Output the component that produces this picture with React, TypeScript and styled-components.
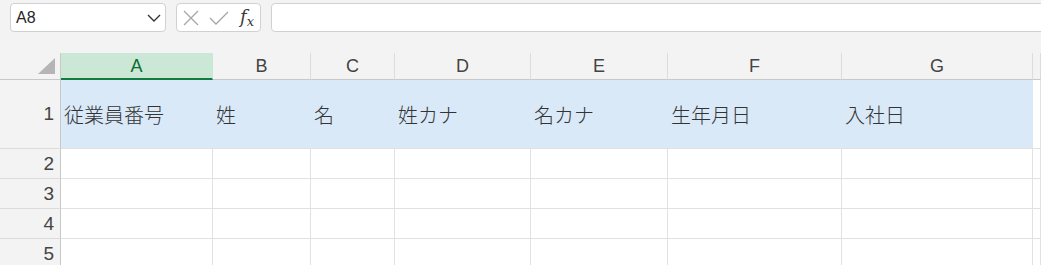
import React from "react";
import styled, { createGlobalStyle } from "styled-components";

const Global = createGlobalStyle`
  html, body { margin: 0; padding: 0; background: #f3f3f3; }
  body { width: 1041px; height: 265px; overflow: hidden; font-family: "Liberation Sans", Arial, sans-serif; }
`;

const Page = styled.div`
  width: 1041px;
  height: 265px;
  background: #f3f3f3;
  display: flex;
  flex-direction: column;
  overflow: hidden;
`;

const FormulaBar = styled.div`
  display: flex;
  gap: 10px;
  padding: 3px 0 0 10px;
  height: 53px;
  flex: none;
  box-sizing: border-box;
  align-items: flex-start;
`;

const Box = styled.div<{ $w?: number; $grow?: boolean }>`
  box-sizing: border-box;
  height: 29px;
  background: #ffffff;
  border: 1px solid #d1d1d1;
  border-radius: 4px;
  display: flex;
  align-items: center;
  ${(p) => (p.$w ? `width: ${p.$w}px; flex: none;` : "")}
  ${(p) => (p.$grow ? `flex: 1; margin-right: -10px;` : "")}
`;

const NameText = styled.span`
  flex: 1;
  padding-left: 5px;
  font-size: 16px;
  color: #262626;
`;

const Chevron = styled.svg`
  width: 16px;
  height: 10px;
  margin-right: 3px;
`;

const FxBox = styled(Box)`
  justify-content: flex-start;
  padding-left: 5px;
  gap: 8px;
`;

const IconSvg = styled.svg`
  flex: none;
`;

const Fx = styled.span`
  font-family: "DejaVu Serif", "Liberation Serif", serif;
  font-style: italic;
  font-size: 18px;
  color: #3a3a3a;
  margin-left: 2px;
  line-height: 1;
  & sub {
    font-size: 13px;
    vertical-align: -3px;
  }
`;

const Sheet = styled.div`
  display: grid;
  grid-template-columns: 61px 152px 98px 84px 136px 137px 174px 191px 1fr;
  grid-template-rows: 27px 69px 30px 30px 30px 30px;
`;

const Corner = styled.div`
  box-sizing: border-box;
  background: #f3f3f3;
  border-right: 1px solid #c8c8c8;
  border-bottom: 1px solid #c8c8c8;
  display: flex;
  align-items: flex-end;
  justify-content: flex-end;
  padding: 0 5px 5px 0;
`;

const ColHead = styled.div<{ $sel?: boolean }>`
  box-sizing: border-box;
  background: ${(p) => (p.$sel ? "#cae8d5" : "#f3f3f3")};
  border-right: 1px solid ${(p) => (p.$sel ? "#cae8d5" : "#dcdcdc")};
  border-bottom: ${(p) => (p.$sel ? "2px solid #107c41" : "1px solid #c8c8c8")};
  color: ${(p) => (p.$sel ? "#0e6b35" : "#444444")};
  font-family: "Liberation Sans", Arial, sans-serif;
  font-size: 18px;
  display: flex;
  align-items: center;
  justify-content: center;
  padding-top: ${(p) => (p.$sel ? "2px" : "1px")};
`;

const RowHead = styled.div`
  box-sizing: border-box;
  background: #f3f3f3;
  border-right: 1px solid #c8c8c8;
  border-bottom: 1px solid #dcdcdc;
  color: #444444;
  font-family: "Liberation Sans", Arial, sans-serif;
  font-size: 19px;
  display: flex;
  align-items: center;
  justify-content: flex-end;
  padding-right: 6px;
`;

const Cell = styled.div<{ $fill?: boolean }>`
  box-sizing: border-box;
  background: ${(p) => (p.$fill ? "#dae9f8" : "#ffffff")};
  border-right: 1px solid ${(p) => (p.$fill ? "#dae9f8" : "#e1e1e1")};
  border-bottom: 1px solid #e1e1e1;
  font-family: "Noto Sans CJK JP", sans-serif;
  font-weight: 300;
  font-size: 20px;
  color: #333333;
  display: flex;
  align-items: center;
  padding-left: 3px;
  white-space: nowrap;
  overflow: hidden;
`;

const cols = ["A", "B", "C", "D", "E", "F", "G", ""];
const headers = ["従業員番号", "姓", "名", "姓カナ", "名カナ", "生年月日", "入社日"];

export default function App() {
  return (
    <Page>
      <Global />
      <FormulaBar>
        <Box $w={156}>
          <NameText>A8</NameText>
          <Chevron viewBox="0 0 16 10">
            <path d="M2 2 L8 8 L14 2" fill="none" stroke="#333" strokeWidth="1.4" />
          </Chevron>
        </Box>
        <FxBox $w={85}>
          <IconSvg width="18" height="18" viewBox="0 0 18 18">
            <path d="M2 2 L16 16 M16 2 L2 16" stroke="#a6a6a6" strokeWidth="1.3" fill="none" />
          </IconSvg>
          <IconSvg width="22" height="18" viewBox="0 0 22 18">
            <path d="M2 9 L8 15 L20 3" stroke="#a6a6a6" strokeWidth="1.3" fill="none" />
          </IconSvg>
          <Fx>
            f<sub>x</sub>
          </Fx>
        </FxBox>
        <Box $grow />
      </FormulaBar>
      <Sheet>
        <Corner>
          <svg width="17" height="16" viewBox="0 0 17 16">
            <path d="M17 0 L17 16 L0 16 Z" fill="#b5b5b5" />
          </svg>
        </Corner>
        {cols.map((c, i) => (
          <ColHead key={"h" + i} $sel={c === "A"}>
            {c}
          </ColHead>
        ))}
        {[1, 2, 3, 4, 5].map((r) => (
          <React.Fragment key={r}>
            <RowHead>{r}</RowHead>
            {cols.map((c, i) => (
              <Cell key={c + r + i} $fill={r === 1 && i < 7}>
                {r === 1 && i < 7 ? headers[i] : ""}
              </Cell>
            ))}
          </React.Fragment>
        ))}
      </Sheet>
    </Page>
  );
}
